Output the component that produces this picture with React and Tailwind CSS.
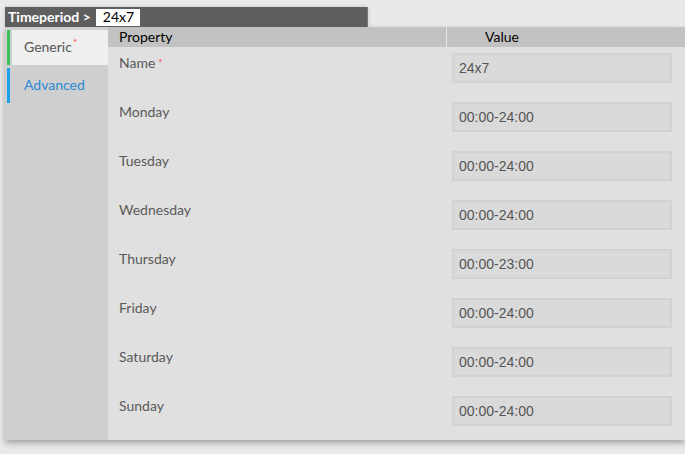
import { useState } from 'react';

const DAYS = [
    { label: 'Name', value: '24x7', required: true },
    { label: 'Monday', value: '00:00-24:00' },
    { label: 'Tuesday', value: '00:00-24:00' },
    { label: 'Wednesday', value: '00:00-24:00' },
    { label: 'Thursday', value: '00:00-23:00' },
    { label: 'Friday', value: '00:00-24:00' },
    { label: 'Saturday', value: '00:00-24:00' },
    { label: 'Sunday', value: '00:00-24:00' },
];

const lato = { fontFamily: 'Lato, "Open Sans", sans-serif' };

function Tab({ label, active, color, required, onClick }) {
    return (
        <div className="flex h-[35px] mb-[3px] cursor-pointer" onClick={onClick}>
            <div className={`w-[3px] ${color}`} />
            <div
                className={`flex-1 ml-[2px] flex items-center pl-[12px] pb-[2px] text-[14px] ${
                    active ? 'bg-[#efefef] text-[#555555]' : 'text-[#2a8ad4]'
                }`}
            >
                {label}
                {required && <span className="text-[#ff3b3b] text-[10px] -mt-[8px] ml-[1px]">*</span>}
            </div>
        </div>
    );
}

export default function App() {
    const [tab, setTab] = useState('generic');

    return (
        <div className="w-[685px] h-[454px] overflow-hidden bg-[#e9e9e9] pt-[7px] pl-[5px]" style={lato}>
            <div className="w-[363px] h-[20px] bg-[#5f5f5f] flex items-center pl-[3px] border-r border-[#7a7a7a] shadow-[0_0_4px_rgba(0,0,0,0.15)]">
                <span className="text-white font-bold text-[14px] leading-none">Timeperiod &gt;</span>
                <span className="ml-[5px] bg-white h-[17px] w-[44px] flex items-center pl-[7px] text-[14px] text-black leading-none">
                    24x7
                </span>
            </div>

            <div className="flex h-[413px] bg-[#e0e0e0] shadow-[0_3px_6px_rgba(0,0,0,0.3)]">
                <div className="w-[103px] bg-[#cfcfcf] pt-[3px] pl-[2px]">
                    <Tab label="Generic" required active={tab === 'generic'} color="bg-[#3cc25a]" onClick={() => setTab('generic')} />
                    <Tab label="Advanced" active={tab === 'advanced'} color="bg-[#1aa3ec]" onClick={() => setTab('advanced')} />
                </div>

                <div className="flex-1">
                    <div className="flex h-[20px] bg-[#c2c2c2] text-[14px] text-black leading-[20px]">
                        <div className="w-[339px] pl-[11px] border-r border-[#e6e6e6]">Property</div>
                        <div className="pl-[38px]">Value</div>
                    </div>

                    <div className="pt-[6px]">
                        {DAYS.map(d => (
                            <div key={d.label} className="flex h-[49px]">
                                <div className="w-[339px] pl-[11px] pt-[1px] text-[14px] text-[#5a5a5a] leading-[17px]">
                                    {d.label}
                                    {d.required && <span className="text-[#ff3b3b] text-[10px] align-top ml-[3px]">*</span>}
                                </div>
                                <div
                                    className="ml-[5px] w-[220px] h-[30px] bg-[#dadada] border-2 border-[#d2d2d2] flex items-center pl-[5px] text-[14px] text-[#555555]"
                                    style={{ fontFamily: '"Liberation Sans", Arial, sans-serif' }}
                                >
                                    {d.value}
                                </div>
                            </div>
                        ))}
                    </div>
                </div>
            </div>
        </div>
    );
}
